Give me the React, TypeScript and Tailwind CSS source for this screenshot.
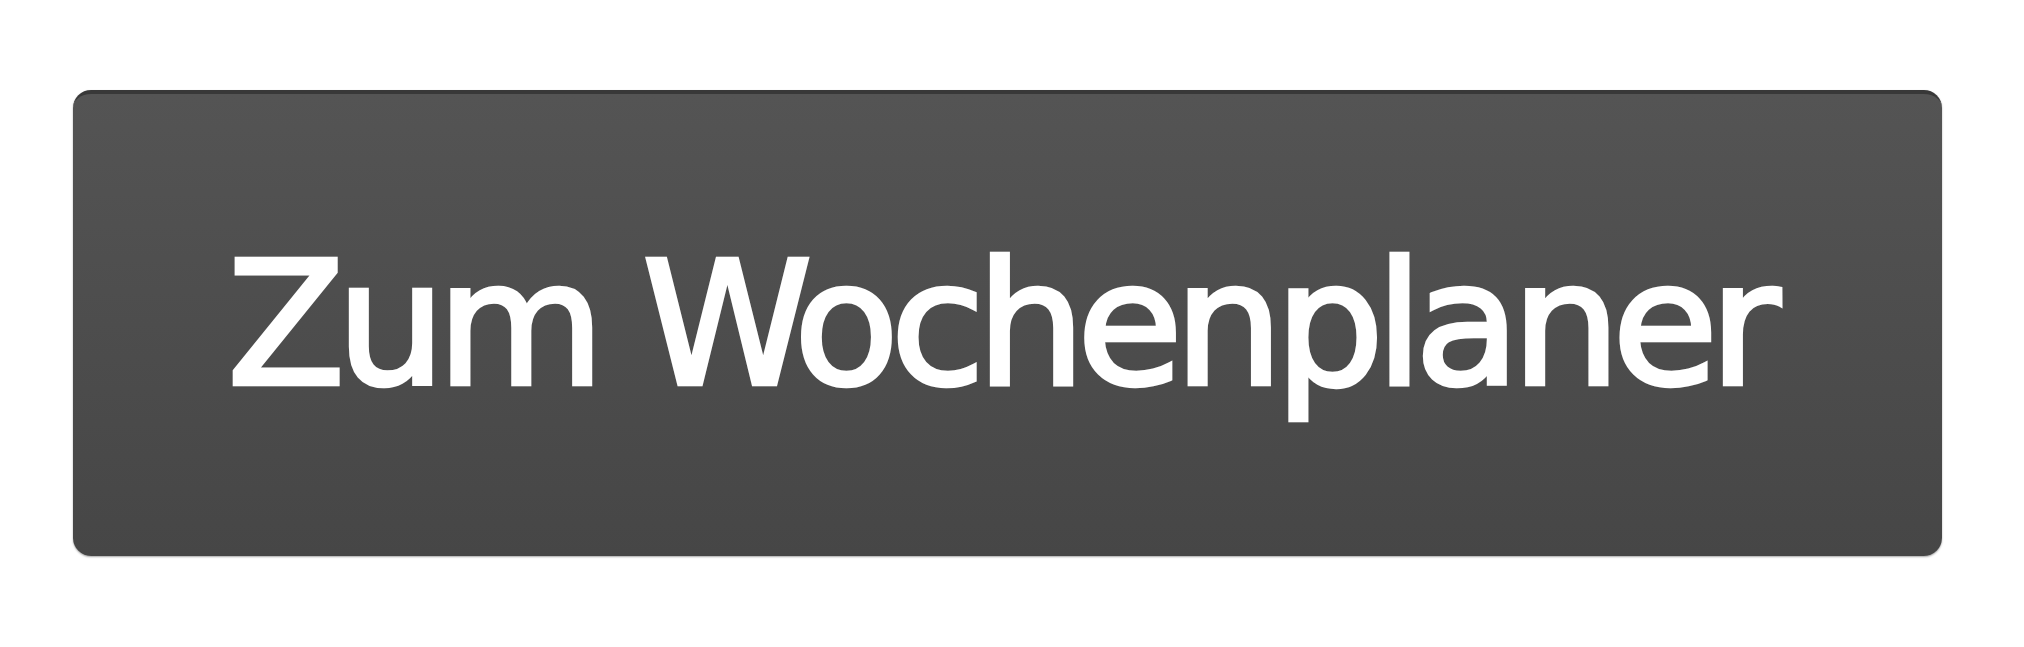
export default function App() {
  return (
    <div className="w-[2024px] h-[647px] bg-white pl-[73px] pt-[90px]">
      {/* big dark action button */}
      <button
        type="button"
        className="w-[1869px] h-[466px] rounded-[18px] border-t-[4px] border-[#383838] bg-gradient-to-b from-[#545454] to-[#464646] shadow-[0_1px_2px_rgba(0,0,0,0.35)] flex items-center justify-center text-white text-[172px] leading-none tracking-[-8.5px] pr-[16px] [-webkit-text-stroke:4.5px_white]"
        style={{ fontFamily: '"DejaVu Sans", sans-serif' }}
      >
        Zum Wochenplaner
      </button>
    </div>
  );
}
